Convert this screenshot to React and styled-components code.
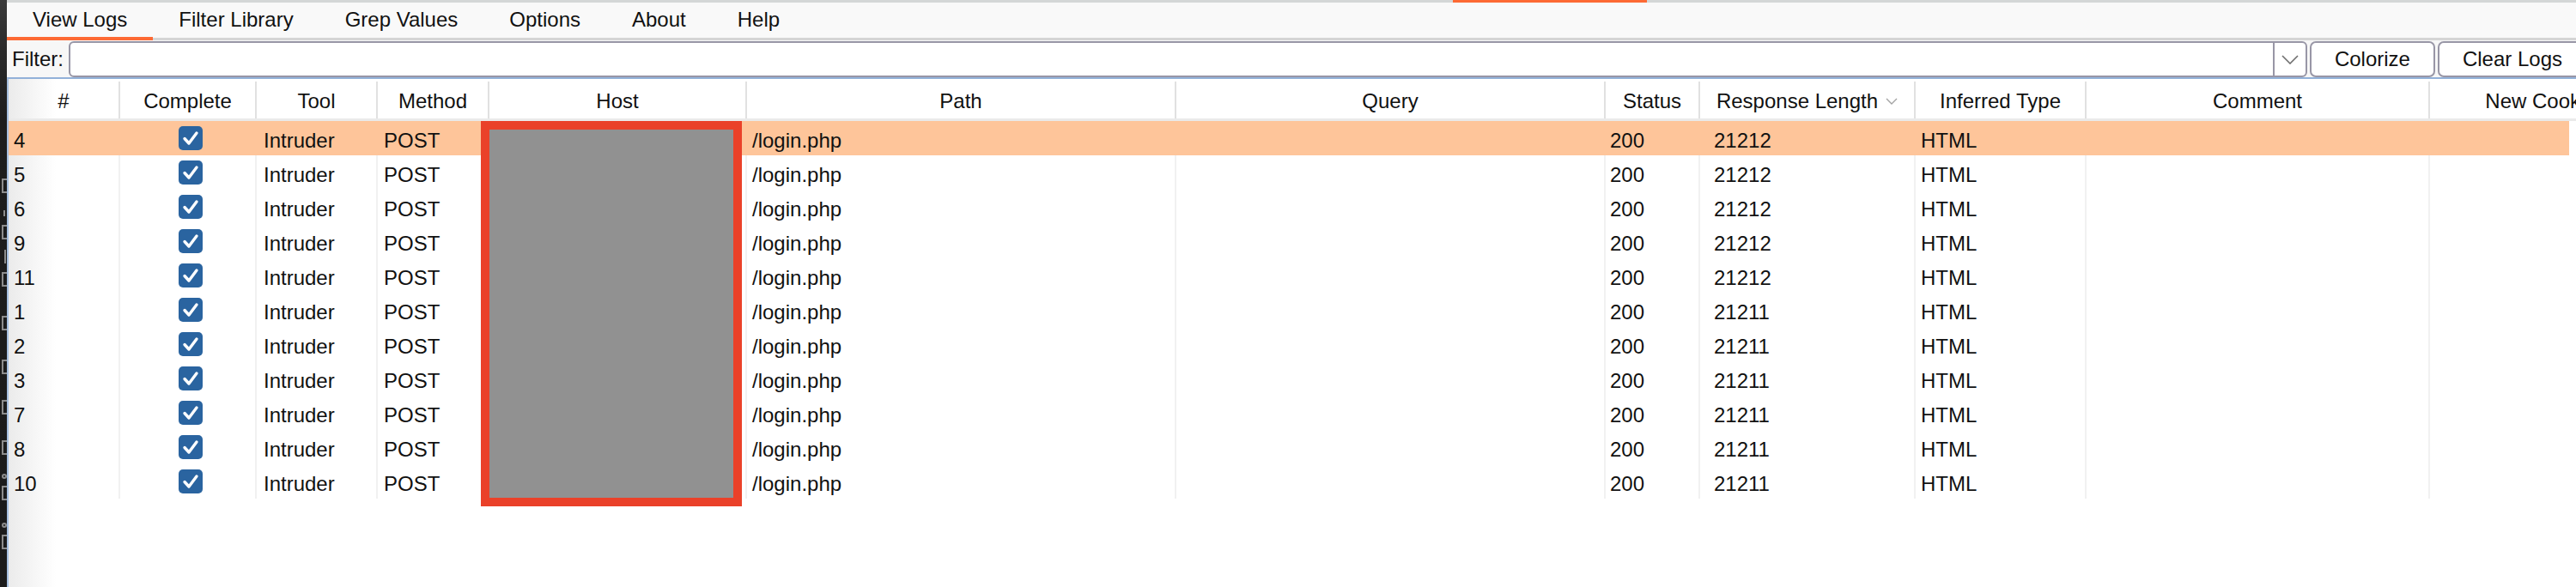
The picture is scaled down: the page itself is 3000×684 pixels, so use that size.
import React from 'react';
import styled, { createGlobalStyle, css } from 'styled-components';

const GlobalStyle = createGlobalStyle`
  html, body { margin: 0; padding: 0; background: #ffffff; overflow: hidden; }
  body { font-family: "Liberation Sans", Arial, Helvetica, sans-serif; }
`;

const Screen = styled.div`
  display: flex;
  width: 3000px;
  height: 684px;
  overflow: hidden;
  background: #ffffff;
  font-family: "Liberation Sans", Arial, Helvetica, sans-serif;
  font-size: 24px;
  color: #111111;
`;

const TerminalEdge = styled.div`
  width: 8px;
  flex-shrink: 0;
  overflow: hidden;
  display: flex;
  flex-direction: column;
  align-items: flex-start;
  box-sizing: border-box;
  padding-left: 2px;
  background: linear-gradient(180deg, #3a3a3a 0px, #2a2a2a 60px, #1d1d1d 140px, #1b1b1b 100%);
`;

const markShapes = {
  bracket: css`
    width: 6px;
    height: 17px;
    border-left: 2px solid #8c8c8c;
    border-top: 2px solid #8c8c8c;
    border-bottom: 2px solid #8c8c8c;
  `,
  ring: css`
    width: 6px;
    height: 6px;
    border-radius: 50%;
    border: 2px solid #8c8c8c;
  `,
  comma: css`
    width: 2px;
    height: 7px;
    margin-left: 2px;
    background: #8c8c8c;
  `,
  stroke: css`
    width: 2px;
    height: 16px;
    margin-left: 3px;
    background: #8c8c8c;
  `,
};

const EdgeMark = styled.span`
  display: block;
  flex-shrink: 0;
  box-sizing: border-box;
  margin-top: ${(p) => p.$gap}px;
  ${(p) => markShapes[p.$kind]}
`;

const Main = styled.div`
  flex: 1;
  min-width: 0;
  display: flex;
  flex-direction: column;
`;

const TopRule = styled.div`
  height: 3px;
  flex-shrink: 0;
  display: flex;
  background: #d4d7d7;
`;

const TopRuleMark = styled.div`
  margin-left: 1684px;
  width: 226px;
  background: #fd6a34;
`;

const TabBar = styled.div`
  height: 44px;
  flex-shrink: 0;
  display: flex;
  background: #f9f9f9;
  box-shadow: inset 0 -3px 0 #d5d5d5;
`;

const Tab = styled.div`
  display: flex;
  align-items: center;
  padding: 0 30px;
  box-sizing: border-box;
  border-bottom: 4px solid ${(p) => (p.$active ? '#fd6a34' : 'transparent')};
  white-space: nowrap;
  color: #111111;
`;

const FilterRow = styled.div`
  height: 43px;
  flex-shrink: 0;
  display: flex;
  align-items: stretch;
  padding-top: 1px;
  box-sizing: border-box;
  margin-right: -13px;
  background: #f7f7f7;
`;

const FilterLabel = styled.label`
  display: flex;
  align-items: center;
  padding: 0 6px 0 6px;
  white-space: nowrap;
`;

const Combo = styled.div`
  flex: 1;
  min-width: 0;
  display: flex;
  border: 2px solid #9896a6;
  border-radius: 6px;
  background: #ffffff;
  overflow: hidden;
`;

const ComboInput = styled.input`
  flex: 1;
  min-width: 0;
  border: none;
  outline: none;
  background: transparent;
  font: inherit;
  padding: 0 8px;
`;

const ComboArrow = styled.div`
  width: 36px;
  flex-shrink: 0;
  display: flex;
  align-items: center;
  justify-content: center;
  border-left: 2px solid #9896a6;
`;

const ActionButton = styled.button`
  flex-shrink: 0;
  margin-left: 3px;
  padding: 0 27px;
  border: 2px solid #9896a6;
  border-radius: 7px;
  background: #ffffff;
  font-family: "Liberation Sans", Arial, Helvetica, sans-serif;
  font-size: 24px;
  color: #111111;
  white-space: nowrap;
`;

const TableFrame = styled.div`
  position: relative;
  flex: 1;
  min-height: 0;
  overflow: hidden;
  border-top: 2px solid #92b1d9;
  border-left: 2px solid #a6bfe0;
  background: linear-gradient(90deg, #ebebeb 0px, #ffffff 55px);
`;

const HeaderRow = styled.div`
  display: flex;
  height: 49px;
  box-sizing: border-box;
  border-bottom: 3px solid #eaeaea;
`;

const HeaderCell = styled.div`
  width: ${(p) => p.$w}px;
  flex-shrink: 0;
  box-sizing: border-box;
  margin-top: 3px;
  padding-top: 3px;
  display: flex;
  align-items: center;
  justify-content: center;
  gap: 9px;
  border-right: 2px solid #e1e1e1;
  white-space: nowrap;
  color: #111111;
`;

const Body = styled.div`
  width: 2982px;
  overflow: hidden;
`;

const Row = styled.div`
  display: flex;
  height: 40px;
  background: ${(p) => (p.$selected ? '#fec59a' : 'transparent')};
`;

const Cell = styled.div`
  width: ${(p) => p.$w}px;
  flex-shrink: 0;
  box-sizing: border-box;
  height: 40px;
  padding-top: 5px;
  padding-left: ${(p) => p.$pad}px;
  display: flex;
  align-items: center;
  justify-content: ${(p) => (p.$center ? 'center' : 'flex-start')};
  border-right: 2px solid ${(p) => (p.$selected ? 'transparent' : '#f1f1f1')};
  white-space: nowrap;
  overflow: hidden;
  color: #111111;
`;

const CheckBox = styled.span`
  width: 28px;
  height: 28px;
  margin-top: -5px;
  margin-left: 6px;
  border-radius: 5px;
  background: #2a64a0;
  display: flex;
  align-items: center;
  justify-content: center;
`;

const Redaction = styled.div`
  position: absolute;
  left: 550px;
  top: 49px;
  width: 304px;
  height: 449px;
  box-sizing: border-box;
  border: 10px solid #ea4129;
  background: #919191;
`;

const columns = [
  { key: 'id', label: '#', w: 130, pad: 6 },
  { key: 'complete', label: 'Complete', w: 159, pad: 0, center: true },
  { key: 'tool', label: 'Tool', w: 141, pad: 8 },
  { key: 'method', label: 'Method', w: 130, pad: 7 },
  { key: 'host', label: 'Host', w: 300, pad: 7 },
  { key: 'path', label: 'Path', w: 500, pad: 6 },
  { key: 'query', label: 'Query', w: 500, pad: 6 },
  { key: 'status', label: 'Status', w: 110, pad: 5 },
  { key: 'len', label: 'Response Length', w: 251, pad: 16, sorted: true },
  { key: 'type', label: 'Inferred Type', w: 199, pad: 6 },
  { key: 'comment', label: 'Comment', w: 400, pad: 6 },
  { key: 'cookies', label: 'New Cookies', w: 272, pad: 6 },
];

const ids = [4, 5, 6, 9, 11, 1, 2, 3, 7, 8, 10];
const rows = ids.map((id, i) => ({
  id: String(id),
  complete: true,
  tool: 'Intruder',
  method: 'POST',
  host: '',
  path: '/login.php',
  query: '',
  status: '200',
  len: i < 5 ? '21212' : '21211',
  type: 'HTML',
  comment: '',
  cookies: '',
}));

const tabs = ['View Logs', 'Filter Library', 'Grep Values', 'Options', 'About', 'Help'];

// fragments of a terminal window peeking in at the left edge
const edgeMarks = [
  { kind: 'bracket', gap: 208 },
  { kind: 'comma', gap: 20 },
  { kind: 'bracket', gap: 10 },
  { kind: 'stroke', gap: 12 },
  { kind: 'bracket', gap: 10 },
  { kind: 'bracket', gap: 34 },
  { kind: 'bracket', gap: 34 },
  { kind: 'bracket', gap: 30 },
  { kind: 'bracket', gap: 30 },
  { kind: 'ring', gap: 22 },
  { kind: 'bracket', gap: 8 },
  { kind: 'ring', gap: 26 },
  { kind: 'bracket', gap: 8 },
];

const Check = () => (
  <svg width="20" height="18" viewBox="0 0 20 18">
    <path d="M3 9.5 L8 15 L17 3" fill="none" stroke="#ffffff" strokeWidth="3.4" strokeLinecap="round" strokeLinejoin="round" />
  </svg>
);

const SortChevron = () => (
  <svg width="14" height="8" viewBox="0 0 14 8">
    <path d="M1 1 L7 7 L13 1" fill="none" stroke="#a3a3a3" strokeWidth="1.4" />
  </svg>
);

const DropChevron = () => (
  <svg width="20" height="11" viewBox="0 0 20 11">
    <path d="M1 1 L10 10 L19 1" fill="none" stroke="#6e6e6e" strokeWidth="1.6" />
  </svg>
);

export default function App() {
  return (
    <>
      <GlobalStyle />
      <Screen>
        <TerminalEdge>
          {edgeMarks.map((m, i) => (
            <EdgeMark key={i} $kind={m.kind} $gap={m.gap} />
          ))}
        </TerminalEdge>
        <Main>
          <TopRule>
            <TopRuleMark />
          </TopRule>
          <TabBar>
            {tabs.map((t, i) => (
              <Tab key={t} $active={i === 0}>
                {t}
              </Tab>
            ))}
          </TabBar>
          <FilterRow>
            <FilterLabel>Filter:</FilterLabel>
            <Combo>
              <ComboInput type="text" defaultValue="" aria-label="Filter" />
              <ComboArrow>
                <DropChevron />
              </ComboArrow>
            </Combo>
            <ActionButton>Colorize</ActionButton>
            <ActionButton>Clear Logs</ActionButton>
          </FilterRow>
          <TableFrame>
            <HeaderRow>
              {columns.map((c) => (
                <HeaderCell key={c.key} $w={c.w}>
                  <span>{c.label}</span>
                  {c.sorted && <SortChevron />}
                </HeaderCell>
              ))}
            </HeaderRow>
            <Body>
              {rows.map((r, ri) => (
                <Row key={r.id} $selected={ri === 0}>
                  {columns.map((c) => (
                    <Cell key={c.key} $w={c.w} $pad={c.pad} $center={c.center} $selected={ri === 0}>
                      {c.key === 'complete' ? (
                        <CheckBox>
                          <Check />
                        </CheckBox>
                      ) : (
                        r[c.key]
                      )}
                    </Cell>
                  ))}
                </Row>
              ))}
            </Body>
            <Redaction />
          </TableFrame>
        </Main>
      </Screen>
    </>
  );
}
